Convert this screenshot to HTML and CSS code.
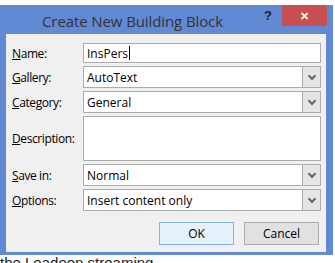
FILE: index.html
```html
<!DOCTYPE html>
<html lang="en">
  <head>
    <meta charset="UTF-8" />
    <meta name="viewport" content="width=device-width, initial-scale=1.0" />
    <title>Create New Building Block</title>
    <link rel="stylesheet" href="styles.css">
  </head>
  <body>
    <div class="doc">
      <p class="doc-line">the Leadeon streaming</p>
    </div>

    <div class="dialog">
      <div class="titlebar">
        <span class="title">Create New Building Block</span>
        <span class="help">?</span>
        <span class="close">&#x2715;</span>
      </div>

      <div class="client">
        <div class="form">
          <label class="lbl"><u>N</u>ame:</label>
          <div class="field text">InsPers<span class="caret"></span></div>

          <label class="lbl"><u>G</u>allery:</label>
          <div class="field select">AutoText<span class="arrow"></span></div>

          <label class="lbl"><u>C</u>ategory:</label>
          <div class="field select">General<span class="arrow"></span></div>

          <label class="lbl"><u>D</u>escription:</label>
          <div class="field area"></div>

          <label class="lbl"><u>S</u>ave in:</label>
          <div class="field select">Normal<span class="arrow"></span></div>

          <label class="lbl"><u>O</u>ptions:</label>
          <div class="field select">Insert content only<span class="arrow"></span></div>
        </div>

        <div class="buttons">
          <button class="btn default">OK</button>
          <button class="btn">Cancel</button>
        </div>
      </div>
    </div>
  </body>
</html>
```

FILE: styles.css
```css
body {
  margin: 0;
  background: #fff;
  font-family: "Open Sans", "Noto Sans", sans-serif;
  width: 335px;
  height: 263px;
  overflow: hidden;
  position: relative;
}
.doc {
  padding-top: 254px;
}
.doc-line {
  margin: 0;
  font-family: "Liberation Sans", sans-serif;
  font-size: 15px;
  line-height: 17px;
  color: #222;
}
.dialog {
  position: absolute;
  left: 0;
  top: 5px;
  width: 333px;
  height: 250px;
  background: #6289d3;
  display: flex;
  flex-direction: column;
}
.titlebar {
  height: 29px;
  display: flex;
  align-items: flex-start;
  position: relative;
}
.title {
  margin: 6px 0 0 42px;
  font-size: 15px;
  color: #333;
  letter-spacing: -0.1px;
}
.help {
  position: absolute;
  left: 264px;
  top: 3px;
  font-family: "Liberation Sans", sans-serif;
  font-weight: bold;
  font-size: 13px;
  color: #222;
}
.close {
  position: absolute;
  left: 282px;
  top: 0;
  width: 45px;
  height: 21px;
  background: #c75050;
  color: #fff;
  font-size: 11px;
  font-weight: bold;
  display: flex;
  align-items: center;
  justify-content: center;
}
.client {
  margin: 0 7px 0 6px;
  height: 218px;
  background: #f0f0f0;
  padding: 9px 6px 0 6px;
  box-sizing: border-box;
}
.form {
  display: grid;
  grid-template-columns: 71px 238px;
  grid-template-rows: 20px 22px 22px 45px 22px 22px;
  row-gap: 3px;
  font-size: 12px;
}
.lbl {
  display: flex;
  align-items: center;
  color: #000;
  letter-spacing: -0.4px;
  white-space: nowrap;
}
.field {
  background: #fff;
  border: 1px solid #acacac;
  box-sizing: border-box;
  display: flex;
  align-items: center;
  padding-left: 3px;
  position: relative;
  color: #000;
}
.caret {
  display: inline-block;
  width: 1px;
  height: 14px;
  background: #000;
  margin-left: 1px;
}
.arrow {
  position: absolute;
  right: 0;
  top: 0;
  bottom: 0;
  width: 17px;
  background: #e5e5e5;
  border-left: 1px solid #acacac;
}
.arrow::after {
  content: "";
  position: absolute;
  left: 6px;
  top: 6px;
  width: 4px;
  height: 4px;
  border-right: 2px solid #666;
  border-bottom: 2px solid #666;
  transform: rotate(45deg);
}
.buttons {
  display: flex;
  justify-content: flex-end;
  gap: 10px;
  margin-top: 11px;
  padding-right: 1px;
}
.btn {
  width: 75px;
  height: 23px;
  font-family: inherit;
  font-size: 12px;
  background: #e1e1e1;
  border: 1px solid #adadad;
  color: #000;
  padding: 0;
}
.btn.default {
  background: #e5f1fb;
  border-color: #7eb4ea;
}
```
